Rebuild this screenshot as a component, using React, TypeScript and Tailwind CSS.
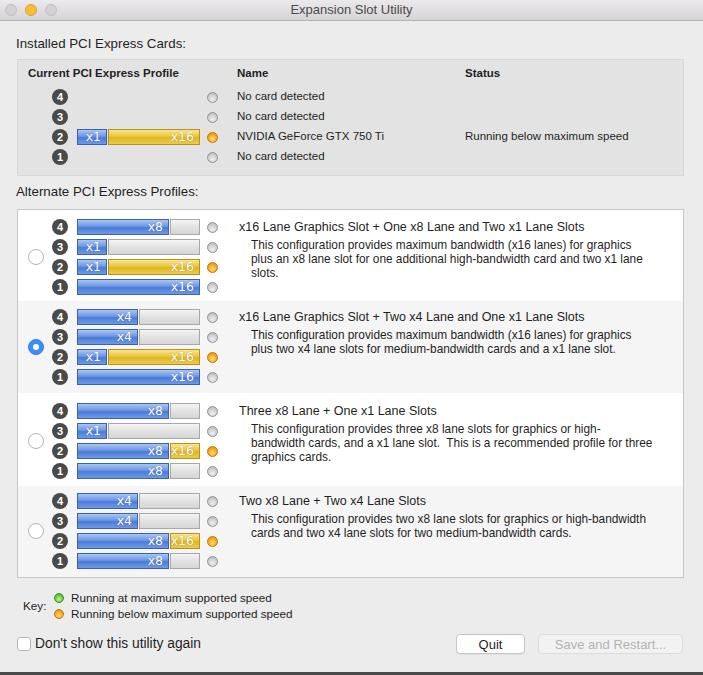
import React from 'react';

type Kind = 'b' | 'y' | 'g';
type Seg = { u: 1 | 2 | 3 | 4; k: Kind; label?: string };
type Slot = { n: number; segs: Seg[] | null; led: 'gray' | 'orange' };

const segColor: Record<Kind, string> = {
  b: 'border-[#3d62ad] bg-[linear-gradient(to_bottom,#aac5f3_0%,#6d96e4_45%,#4b7bd8_55%,#6e99e6_100%)]',
  y: 'border-[#b8921c] bg-[linear-gradient(to_bottom,#f7e594_0%,#e9c73c_45%,#dfb624_55%,#ecca4c_100%)]',
  g: 'border-[#a8a8a8] bg-[linear-gradient(to_bottom,#f4f4f4_0%,#e2e2e2_50%,#d6d6d6_100%)]',
};

const segWidth: Record<number, string> = {
  1: 'w-[30px]',
  2: 'w-[61px]',
  3: 'w-[92px]',
  4: 'w-[123px]',
};

const font = { fontFamily: '"Liberation Sans", Arial, sans-serif' };

const Bar = ({ segs }: { segs: Seg[] | null }) => (
  <div className="flex gap-[1px] w-[123px] h-[16px]">
    {segs &&
      segs.map((s, i) => (
        <div
          key={i}
          className={`h-full border flex items-center justify-end pr-[5px] text-white text-[12.5px] leading-[14px] [font-family:'DejaVu_Sans',sans-serif] [text-shadow:0_0_1px_rgba(0,0,0,0.35)] ${segWidth[s.u]} ${segColor[s.k]}`}
        >
          {s.label}
        </div>
      ))}
  </div>
);

const Led = ({ color, size = 'w-[11px] h-[11px]' }: { color: 'gray' | 'orange' | 'green'; size?: string }) => {
  const c =
    color === 'orange'
      ? 'border-[#c9710a] bg-[radial-gradient(circle_at_50%_65%,#ffe37a_0%,#f9a81a_55%,#e98a05_100%)]'
      : color === 'green'
      ? 'border-[#3a8f1e] bg-[radial-gradient(circle_at_50%_65%,#c8f59a_0%,#6ccc3c_55%,#45a624_100%)]'
      : 'border-[#939393] bg-[radial-gradient(circle_at_50%_70%,#f0f0f0_0%,#cecece_55%,#b4b4b4_100%)]';
  return <div className={`rounded-full border shrink-0 ${size} ${c}`} />;
};

const Badge = ({ n }: { n: number }) => (
  <div className="w-[16px] h-[16px] rounded-full bg-[#4a4a4a] text-white text-[11px] font-bold flex items-center justify-center leading-none shrink-0">
    {n}
  </div>
);

const SlotLine = ({ slot }: { slot: Slot }) => (
  <div className="flex items-center h-[16px]">
    <Badge n={slot.n} />
    <div className="ml-[9px]">
      <Bar segs={slot.segs} />
    </div>
    <div className="ml-[7px]">
      <Led color={slot.led} />
    </div>
  </div>
);

const installed: { slot: Slot; name: string; status: string }[] = [
  { slot: { n: 4, segs: null, led: 'gray' }, name: 'No card detected', status: '' },
  { slot: { n: 3, segs: null, led: 'gray' }, name: 'No card detected', status: '' },
  {
    slot: { n: 2, segs: [{ u: 1, k: 'b', label: 'x1' }, { u: 3, k: 'y', label: 'x16' }], led: 'orange' },
    name: 'NVIDIA GeForce GTX 750 Ti',
    status: 'Running below maximum speed',
  },
  { slot: { n: 1, segs: null, led: 'gray' }, name: 'No card detected', status: '' },
];

const profiles: { h: string; pt: string; bg: string; selected: boolean; title: string; lines: string[]; slots: Slot[] }[] = [
  {
    h: 'h-[91px]',
    pt: 'pt-[9px]',
    bg: 'bg-white',
    selected: false,
    title: 'x16 Lane Graphics Slot + One x8 Lane and Two x1 Lane Slots',
    lines: [
      'This configuration provides maximum bandwidth (x16 lanes) for graphics',
      'plus an x8 lane slot for one additional high-bandwidth card and two x1 lane',
      'slots.',
    ],
    slots: [
      { n: 4, segs: [{ u: 3, k: 'b', label: 'x8' }, { u: 1, k: 'g' }], led: 'gray' },
      { n: 3, segs: [{ u: 1, k: 'b', label: 'x1' }, { u: 3, k: 'g' }], led: 'gray' },
      { n: 2, segs: [{ u: 1, k: 'b', label: 'x1' }, { u: 3, k: 'y', label: 'x16' }], led: 'orange' },
      { n: 1, segs: [{ u: 4, k: 'b', label: 'x16' }], led: 'gray' },
    ],
  },
  {
    h: 'h-[92px]',
    pt: 'pt-[8px]',
    bg: 'bg-[#f5f5f5]',
    selected: true,
    title: 'x16 Lane Graphics Slot + Two x4 Lane and One x1 Lane Slots',
    lines: [
      'This configuration provides maximum bandwidth (x16 lanes) for graphics',
      'plus two x4 lane slots for medium-bandwidth cards and a x1 lane slot.',
    ],
    slots: [
      { n: 4, segs: [{ u: 2, k: 'b', label: 'x4' }, { u: 2, k: 'g' }], led: 'gray' },
      { n: 3, segs: [{ u: 2, k: 'b', label: 'x4' }, { u: 2, k: 'g' }], led: 'gray' },
      { n: 2, segs: [{ u: 1, k: 'b', label: 'x1' }, { u: 3, k: 'y', label: 'x16' }], led: 'orange' },
      { n: 1, segs: [{ u: 4, k: 'b', label: 'x16' }], led: 'gray' },
    ],
  },
  {
    h: 'h-[93px]',
    pt: 'pt-[10px]',
    bg: 'bg-white',
    selected: false,
    title: 'Three x8 Lane + One x1 Lane Slots',
    lines: [
      'This configuration provides three x8 lane slots for graphics or high-',
      'bandwidth cards, and a x1 lane slot.\u00a0 This is a recommended profile for three',
      'graphics cards.',
    ],
    slots: [
      { n: 4, segs: [{ u: 3, k: 'b', label: 'x8' }, { u: 1, k: 'g' }], led: 'gray' },
      { n: 3, segs: [{ u: 1, k: 'b', label: 'x1' }, { u: 3, k: 'g' }], led: 'gray' },
      { n: 2, segs: [{ u: 3, k: 'b', label: 'x8' }, { u: 1, k: 'y', label: 'x16' }], led: 'orange' },
      { n: 1, segs: [{ u: 3, k: 'b', label: 'x8' }, { u: 1, k: 'g' }], led: 'gray' },
    ],
  },
  {
    h: 'h-[91px]',
    pt: 'pt-[7px]',
    bg: 'bg-[#f5f5f5]',
    selected: false,
    title: 'Two x8 Lane + Two x4 Lane Slots',
    lines: [
      'This configuration provides two x8 lane slots for graphics or high-bandwidth',
      'cards and two x4 lane slots for two medium-bandwidth cards.',
    ],
    slots: [
      { n: 4, segs: [{ u: 2, k: 'b', label: 'x4' }, { u: 2, k: 'g' }], led: 'gray' },
      { n: 3, segs: [{ u: 2, k: 'b', label: 'x4' }, { u: 2, k: 'g' }], led: 'gray' },
      { n: 2, segs: [{ u: 3, k: 'b', label: 'x8' }, { u: 1, k: 'y', label: 'x16' }], led: 'orange' },
      { n: 1, segs: [{ u: 3, k: 'b', label: 'x8' }, { u: 1, k: 'g' }], led: 'gray' },
    ],
  },
];

const Radio = ({ on }: { on: boolean }) =>
  on ? (
    <div className="w-[16px] h-[16px] rounded-full bg-[#3b8ef7] border border-[#2f7ee4] flex items-center justify-center shrink-0">
      <div className="w-[6px] h-[6px] rounded-full bg-white" />
    </div>
  ) : (
    <div className="w-[16px] h-[16px] rounded-full bg-white border border-[#b3b3b3] shrink-0" />
  );

const App: React.FC = () => {
  return (
    <div className="w-[703px] h-[675px] bg-[#ececec] flex flex-col text-[#1f1f1f] border-b-[3px] border-[#4a4a4a] overflow-hidden" style={font}>
      {/* title bar */}
      <div className="h-[21px] shrink-0 bg-[linear-gradient(to_bottom,#ebe9eb,#d6d4d6)] border-b border-[#b3b3b3] flex items-center relative">
        <div className="flex items-center gap-[8px] pl-[5px]">
          <div className="w-[12px] h-[12px] rounded-full bg-[#d3d1d3] border border-[#bfbdbf]" />
          <div className="w-[12px] h-[12px] rounded-full bg-[#f6bd3b] border border-[#dea135]" />
          <div className="w-[12px] h-[12px] rounded-full bg-[#d3d1d3] border border-[#bfbdbf]" />
        </div>
        <div className="absolute inset-0 flex items-center justify-center text-[13px] text-[#4b4b4b]">Expansion Slot Utility</div>
      </div>

      <div className="pl-[17px] pr-[19px]">
        <div className="mt-[15px] h-[16px] leading-[16px] text-[13.3px] -ml-[1px]">Installed PCI Express Cards:</div>

        <div className="mt-[7px] h-[117px] border border-[#d8d8d8] bg-[#e3e3e3] pt-[6px]">
          <div className="flex h-[14px] leading-[14px] text-[11.5px] font-bold">
            <div className="w-[219px] pl-[10px]">Current PCI Express Profile</div>
            <div className="w-[228px]">Name</div>
            <div>Status</div>
          </div>
          <div className="mt-[9px] flex flex-col gap-[4px]">
            {installed.map((r) => (
              <div key={r.slot.n} className="flex items-center h-[16px] text-[11.5px]">
                <div className="w-[219px] pl-[34px]">
                  <SlotLine slot={r.slot} />
                </div>
                <div className="w-[228px]">{r.name}</div>
                <div>{r.status}</div>
              </div>
            ))}
          </div>
        </div>

        <div className="mt-[8px] h-[16px] leading-[16px] text-[13.3px] -ml-[1px]">Alternate PCI Express Profiles:</div>

        <div className="mt-[9px] border border-[#c6c6c6] bg-white">
          {profiles.map((p, i) => (
            <div key={i} className={`flex items-start pl-[10px] ${p.h} ${p.pt} ${p.bg}`}>
              <div className="flex items-center">
                <Radio on={p.selected} />
                <div className="ml-[8px] flex flex-col gap-[4px]">
                  {p.slots.map((s) => (
                    <SlotLine key={s.n} slot={s} />
                  ))}
                </div>
              </div>
              <div className="ml-[21px]">
                <div className="text-[12.5px] leading-[16px] whitespace-nowrap">{p.title}</div>
                <div className="mt-[3px] pl-[12px] text-[11.85px] leading-[14px] whitespace-nowrap">
                  {p.lines.map((l, j) => (
                    <div key={j}>{l}</div>
                  ))}
                </div>
              </div>
            </div>
          ))}
        </div>

        <div className="mt-[12px] flex items-center text-[11.7px]">
          <div className="ml-[6px] w-[23px]">Key:</div>
          <div className="ml-[8px] flex flex-col">
            <div className="flex items-center h-[16px]">
              <Led color="green" size="w-[10px] h-[10px]" />
              <div className="ml-[7px]">Running at maximum supported speed</div>
            </div>
            <div className="flex items-center h-[16px]">
              <Led color="orange" size="w-[10px] h-[10px]" />
              <div className="ml-[7px]">Running below maximum supported speed</div>
            </div>
          </div>
        </div>

        <div className="mt-[12px] flex items-center h-[20px] pr-[1px]">
          <div className="w-[14px] h-[14px] rounded-[3px] border border-[#b5b5b5] bg-white shrink-0" />
          <div className="ml-[4px] text-[13.8px]">Don't show this utility again</div>
          <div className="ml-auto flex items-center gap-[13px]">
            <button className="w-[69px] h-[20px] rounded-[4px] border border-[#c6c6c6] bg-white text-[13px] leading-none text-[#1f1f1f] shadow-[0_1px_0_rgba(0,0,0,0.05)]">
              Quit
            </button>
            <button className="w-[145px] h-[20px] rounded-[4px] border border-[#dcdcdc] bg-[#f2f2f2] text-[13px] leading-none text-[#b3b3b3]">
              Save and Restart...
            </button>
          </div>
        </div>
      </div>
    </div>
  );
};

export default App;
